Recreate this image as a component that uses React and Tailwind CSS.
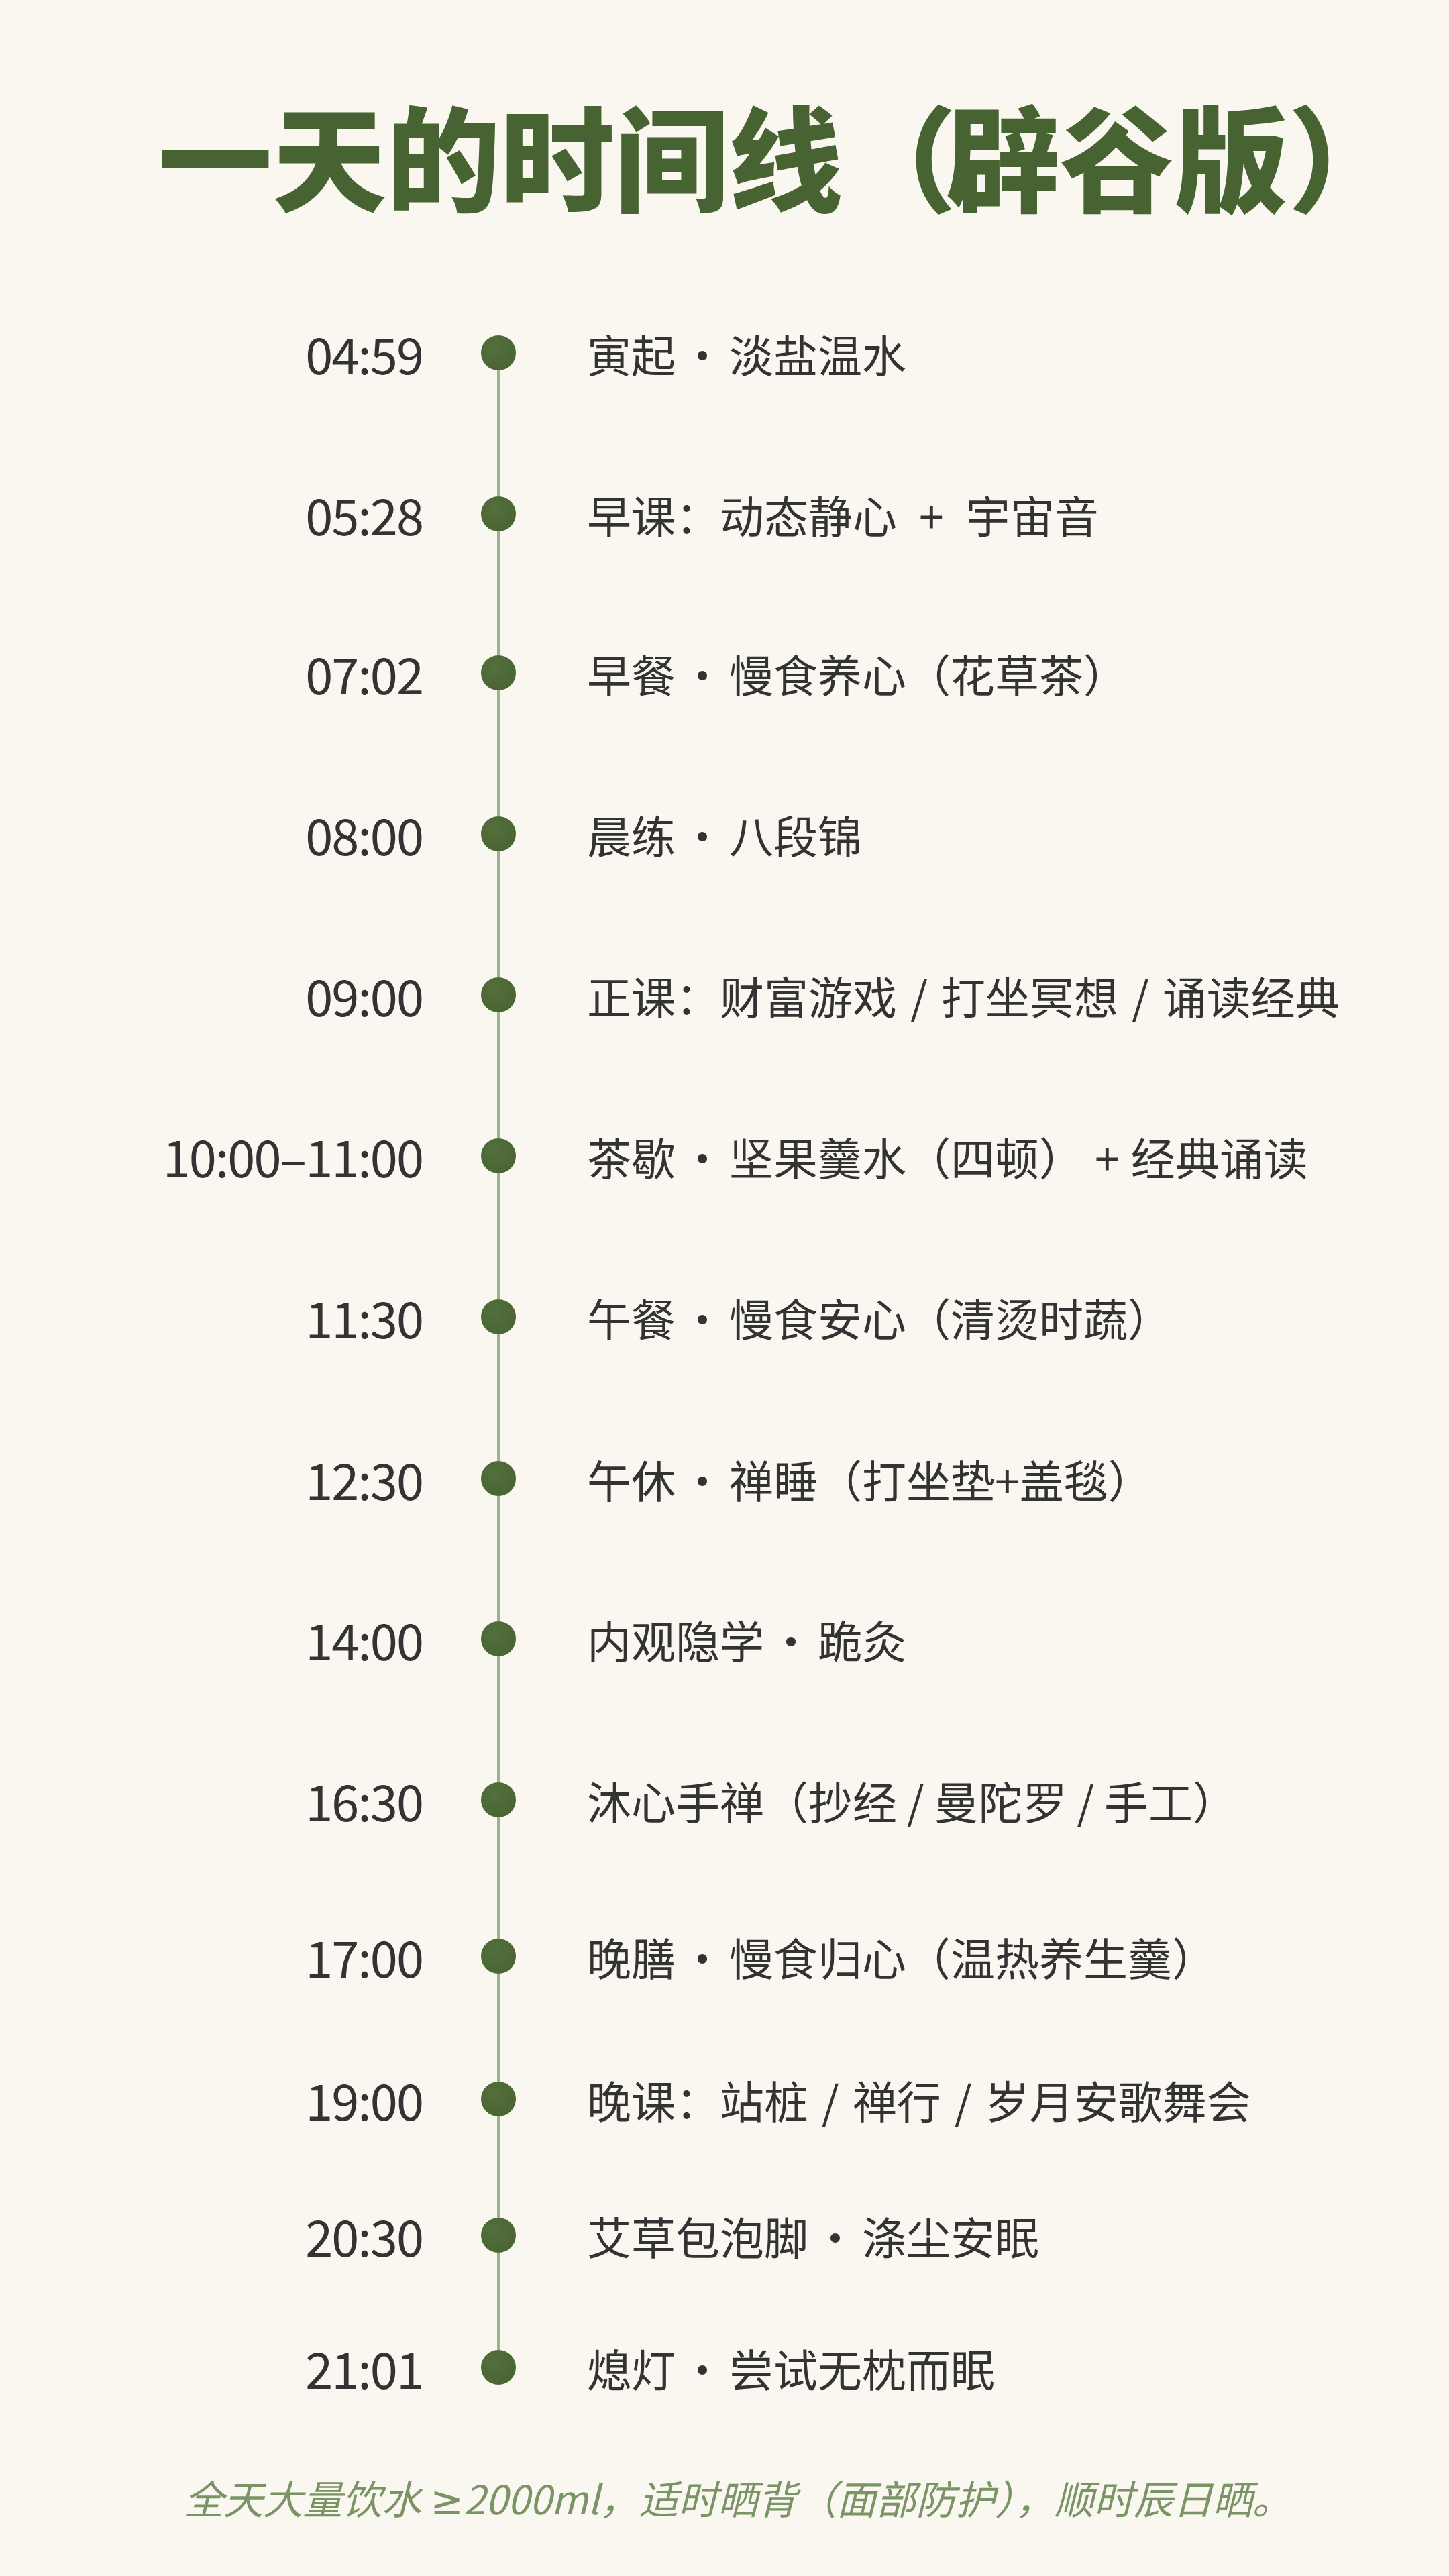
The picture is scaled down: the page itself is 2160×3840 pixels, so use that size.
import React from "react";

const D = () => <span className="mx-[7px]">·</span>;
const S = () => <span className="mx-[20px]">/</span>;
const P = ({ m = "mx-[33px]" }) => <span className={m}>+</span>;

const rows = [
  { t: "04:59", s: <>寅起<D />淡盐温水</>, h: 240 },
  { t: "05:28", s: <>早课：动态静心<P />宇宙音</>, h: 237 },
  { t: "07:02", s: <>早餐<D />慢食养心（花草茶）</>, h: 240 },
  { t: "08:00", s: <>晨练<D />八段锦</>, h: 240 },
  { t: "09:00", s: <>正课：财富游戏<S />打坐冥想<S />诵读经典</>, h: 240 },
  { t: "10:00–11:00", s: <>茶歇<D />坚果羹水（四顿）<P m="mx-[17px]" />经典诵读</>, h: 240 },
  { t: "11:30", s: <>午餐<D />慢食安心（清烫时蔬）</>, h: 241 },
  { t: "12:30", s: <>午休<D />禅睡（打坐垫+盖毯）</>, h: 239 },
  { t: "14:00", s: <>内观隐学<D />跪灸</>, h: 240 },
  { t: "16:30", s: <>沐心手禅（抄经 / 曼陀罗 / 手工）</>, h: 233 },
  { t: "17:00", s: <>晚膳<D />慢食归心（温热养生羹）</>, h: 213 },
  { t: "19:00", s: <>晚课：站桩<S />禅行<S />岁月安歌舞会</>, h: 203 },
  { t: "20:30", s: <>艾草包泡脚<D />涤尘安眠</>, h: 197 },
  { t: "21:01", s: <>熄灯<D />尝试无枕而眠</>, h: 52 },
];

const cjk = { fontFamily: '"Noto Sans CJK SC", "Noto Sans", sans-serif' };

export default function App() {
  return (
    <div className="w-[2160px] min-h-[3840px] bg-[#faf7f1] flex flex-col" style={cjk}>
      <h1 className="mt-[144px] pl-[236px] text-[170px] leading-none font-black text-[#466331] whitespace-nowrap">
        一天的时间线<span className="mr-[-16px]">（</span>辟谷版）
      </h1>
      <div className="mt-[186px] flex flex-col">
        {rows.map((r, i) => {
          const last = i === rows.length - 1;
          return (
            <div key={i} className="flex items-start" style={{ height: r.h }}>
              <div className="w-[630px] h-[52px] flex items-center justify-end text-[74px] leading-none text-[#333333] tracking-[-2px] whitespace-nowrap">
                {r.t}
              </div>
              <div className="ml-[87px] w-[52px] h-full flex flex-col items-center">
                <div className="w-[52px] h-[52px] shrink-0 rounded-full bg-[radial-gradient(circle_at_40%_35%,#536f3d,#45622f)]" />
                {!last && <div className="w-[4px] flex-1 bg-[#9bb38d]" />}
              </div>
              <div className="ml-[106px] h-[52px] flex items-center text-[66px] leading-none text-[#333333] whitespace-nowrap">
                {r.s}
              </div>
            </div>
          );
        })}
      </div>
      <p className="mt-[138px] pl-[40px] text-center text-[59px] leading-none italic text-[#7a9466] whitespace-nowrap">
        全天大量饮水 <span className="font-['DejaVu_Sans']">≥</span>2000ml，适时晒背（面部防护），顺时辰日晒。
      </p>
    </div>
  );
}
